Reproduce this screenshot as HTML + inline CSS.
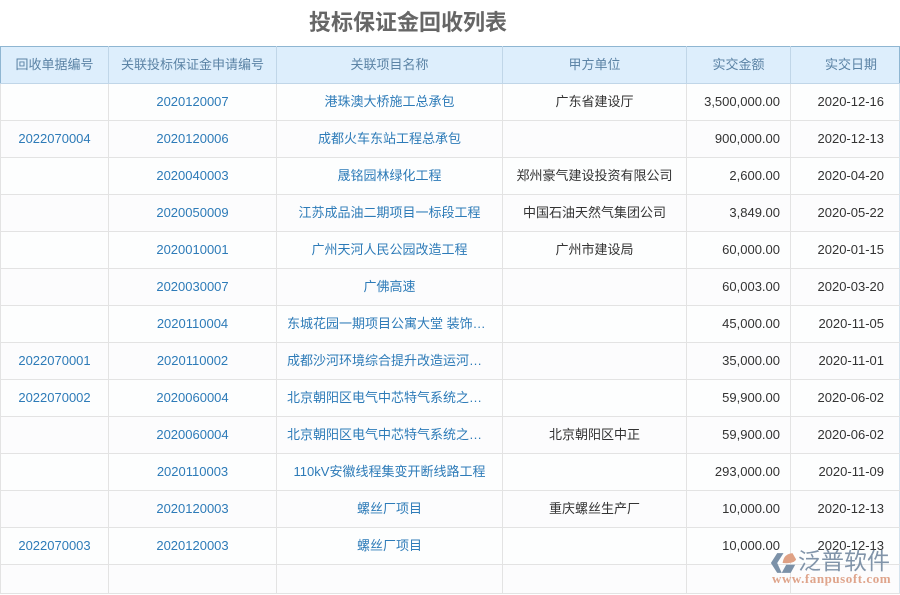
<!DOCTYPE html>
<html lang="zh"><head><meta charset="utf-8">
<style>
html,body{margin:0;padding:0;background:#fff;width:900px;height:595px;overflow:hidden}
body{position:relative;font-family:"Liberation Sans","Noto Sans CJK SC",sans-serif;font-size:13px}
h1{position:absolute;left:309px;top:8px;margin:0;font-size:22px;line-height:30px;font-weight:bold;color:#666;white-space:nowrap}
table{position:absolute;left:0;top:46px;width:899px;border-collapse:collapse;table-layout:fixed}
th,td{height:36px;padding:0;box-sizing:content-box;text-align:center;white-space:nowrap;overflow:hidden;line-height:36px;font-weight:normal}
th{background:#ddeefc;color:#5b83a5;border:1px solid #c0d6e8;border-top:1px solid #8fb6d2}
th:first-child{border-left:1px solid #8fb6d2}
th:last-child{border-right:1px solid #8fb6d2;text-align:right;padding-right:22px}
td{border:1px solid #e3e3e3;color:#333}
td:last-child{border-right:1px solid #d5e3ee;text-align:right;padding-right:15px}
td.l{color:#2d7bb8}
td.r{text-align:right;padding-right:10px}
td.e{padding:0 16px;text-align:left;overflow:hidden;text-overflow:ellipsis}
td.e span{display:block;width:199px;margin-left:-6px;overflow:hidden;text-overflow:ellipsis}
tr:nth-child(odd) td{background:#fdfefe}
tr:nth-child(even) td{background:#fcfcfd}
tr.last td{height:28px;line-height:28px}
.wm{position:absolute;left:770px;top:549px;width:122px;height:42px}
.wm1{position:absolute;left:28px;top:-2px;font-size:23px;line-height:28px;color:#7489a0;opacity:.9;white-space:nowrap}
.wm2{position:absolute;left:2px;top:22px;font-family:"Liberation Serif",serif;font-size:13px;line-height:16px;font-weight:bold;color:#dfa48b;letter-spacing:.55px;white-space:nowrap}
</style></head><body>
<h1>投标保证金回收列表</h1>
<table>
<colgroup><col style="width:108px"><col style="width:168px"><col style="width:226px"><col style="width:184px"><col style="width:104px"><col style="width:109px"></colgroup>
<thead><tr><th>回收单据编号</th><th>关联投标保证金申请编号</th><th>关联项目名称</th><th>甲方单位</th><th>实交金额</th><th>实交日期</th></tr></thead>
<tbody>
<tr><td class="l"></td><td class="l">2020120007</td><td class="l">港珠澳大桥施工总承包</td><td>广东省建设厅</td><td class="r">3,500,000.00</td><td>2020-12-16</td></tr>
<tr><td class="l">2022070004</td><td class="l">2020120006</td><td class="l">成都火车东站工程总承包</td><td></td><td class="r">900,000.00</td><td>2020-12-13</td></tr>
<tr><td class="l"></td><td class="l">2020040003</td><td class="l">晟铭园林绿化工程</td><td>郑州豪气建设投资有限公司</td><td class="r">2,600.00</td><td>2020-04-20</td></tr>
<tr><td class="l"></td><td class="l">2020050009</td><td class="l">江苏成品油二期项目一标段工程</td><td>中国石油天然气集团公司</td><td class="r">3,849.00</td><td>2020-05-22</td></tr>
<tr><td class="l"></td><td class="l">2020010001</td><td class="l">广州天河人民公园改造工程</td><td>广州市建设局</td><td class="r">60,000.00</td><td>2020-01-15</td></tr>
<tr><td class="l"></td><td class="l">2020030007</td><td class="l">广佛高速</td><td></td><td class="r">60,003.00</td><td>2020-03-20</td></tr>
<tr><td class="l"></td><td class="l">2020110004</td><td class="l e"><span>东城花园一期项目公寓大堂 装饰装修工程</span></td><td></td><td class="r">45,000.00</td><td>2020-11-05</td></tr>
<tr><td class="l">2022070001</td><td class="l">2020110002</td><td class="l e"><span>成都沙河环境综合提升改造运河工程项目</span></td><td></td><td class="r">35,000.00</td><td>2020-11-01</td></tr>
<tr><td class="l">2022070002</td><td class="l">2020060004</td><td class="l e"><span>北京朝阳区电气中芯特气系统之工程项目</span></td><td></td><td class="r">59,900.00</td><td>2020-06-02</td></tr>
<tr><td class="l"></td><td class="l">2020060004</td><td class="l e"><span>北京朝阳区电气中芯特气系统之工程项目</span></td><td>北京朝阳区中正</td><td class="r">59,900.00</td><td>2020-06-02</td></tr>
<tr><td class="l"></td><td class="l">2020110003</td><td class="l">110kV安徽线程集变开断线路工程</td><td></td><td class="r">293,000.00</td><td>2020-11-09</td></tr>
<tr><td class="l"></td><td class="l">2020120003</td><td class="l">螺丝厂项目</td><td>重庆螺丝生产厂</td><td class="r">10,000.00</td><td>2020-12-13</td></tr>
<tr><td class="l">2022070003</td><td class="l">2020120003</td><td class="l">螺丝厂项目</td><td></td><td class="r">10,000.00</td><td>2020-12-13</td></tr>
<tr class="last"><td></td><td></td><td></td><td></td><td></td><td></td></tr>
</tbody></table>
<div class="wm">
<svg width="27" height="24" viewBox="0 0 30 26" style="position:absolute;left:0;top:2px">
<path d="M8 2H15L8 13L13 24H8L1 13Z" fill="#7b91a8"/>
<path d="M14 13C15 6 18 3 25 2L29 9C28 12 22 14 14 13Z" fill="#dfa184"/>
<path d="M13 24L18 15H28L23 24Z" fill="#7b91a8"/>
</svg>
<div class="wm1">泛普软件</div>
<div class="wm2">www.fanpusoft.com</div>
</div>
</body></html>
